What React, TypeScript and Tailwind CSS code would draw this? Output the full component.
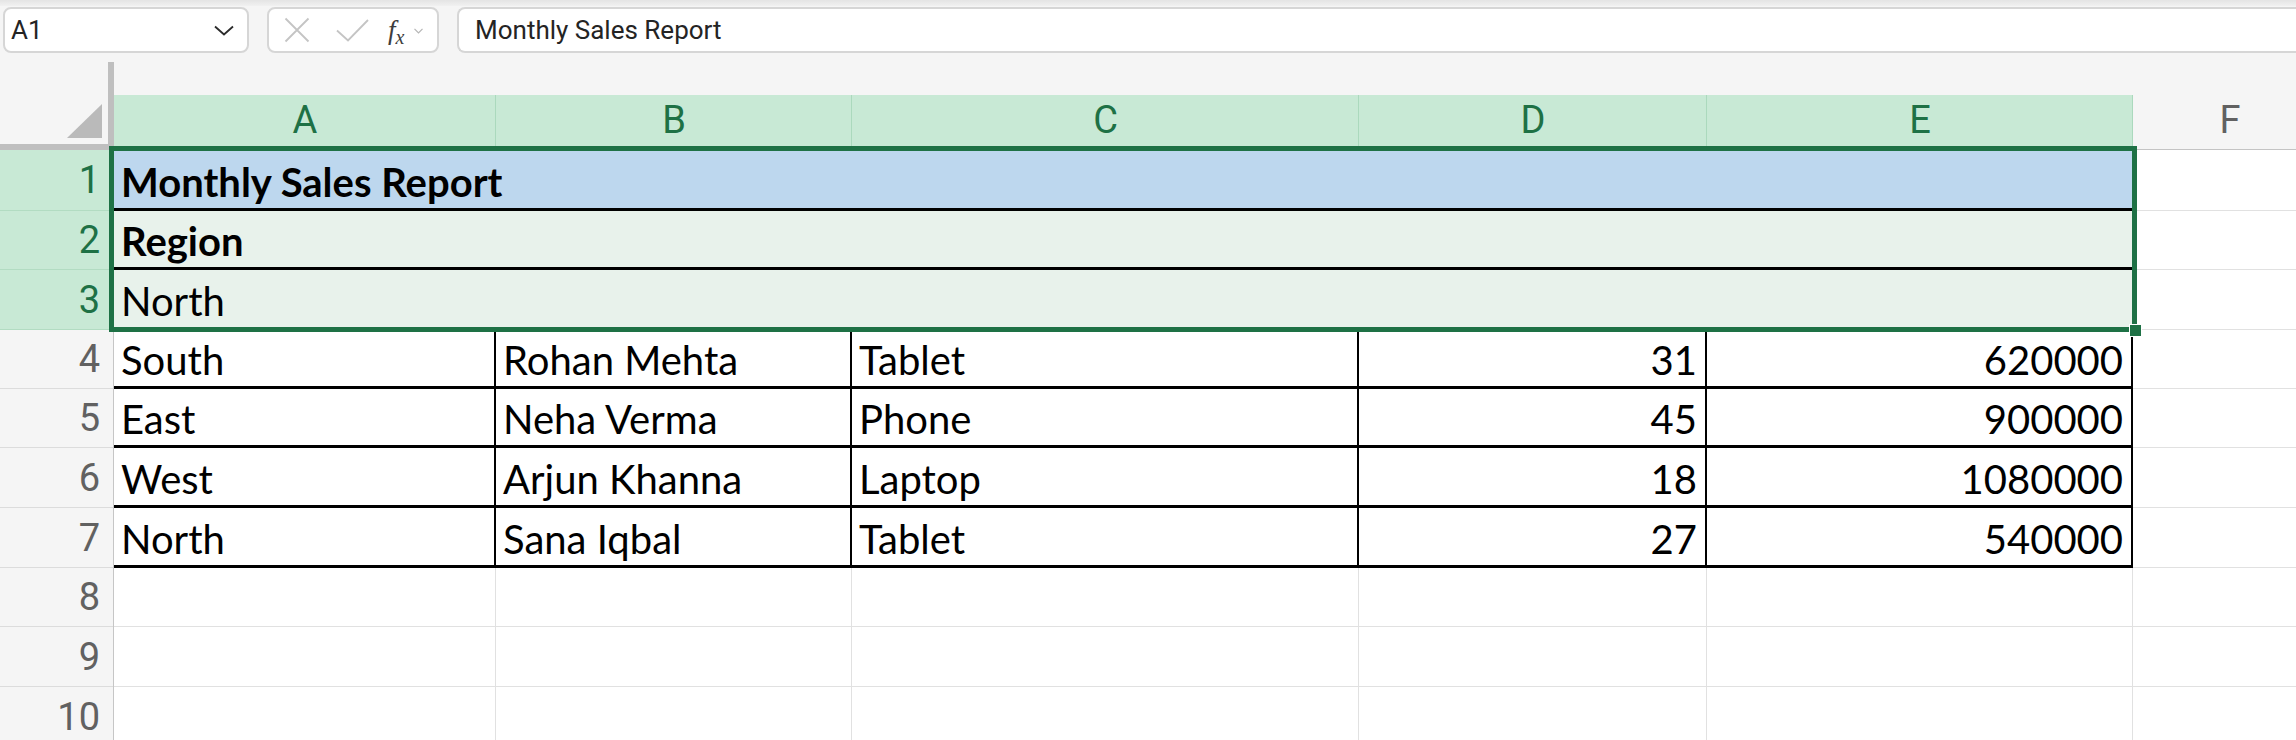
import React from 'react';

const COLS = ['A', 'B', 'C', 'D', 'E'];

const HEIGHTS: Record<number, string> = {
  1: 'h-[61px]',
  2: 'h-[59px]',
  3: 'h-[60px]',
  4: 'h-[59px]',
  5: 'h-[59px]',
  6: 'h-[60px]',
  7: 'h-[60px]',
  8: 'h-[59px]',
  9: 'h-[60px]',
  10: 'h-[60px]',
};

const DATA = [
  ['South', 'Rohan Mehta', 'Tablet', '31', '620000'],
  ['East', 'Neha Verma', 'Phone', '45', '900000'],
  ['West', 'Arjun Khanna', 'Laptop', '18', '1080000'],
  ['North', 'Sana Iqbal', 'Tablet', '27', '540000'],
];

const cellFont = "font-['Lato','Open_Sans',sans-serif] text-[40px] text-black";
const uiFont = "font-['Roboto','Noto_Sans',sans-serif]";

const RowHeader = ({ n, selected }: { n: number; selected?: boolean }) => (
  <div
    className={`${HEIGHTS[n]} flex items-center justify-end pr-[14px] ${uiFont} text-[38px] ${
      selected
        ? 'bg-[#c8e9d5] text-[#1e7145] shadow-[inset_0_-1px_0_#b2dcc2]'
        : 'bg-[#f5f5f5] text-[#616161] shadow-[inset_-1px_0_0_#c6c6c6,inset_0_-1px_0_#dcdcdc]'
    }`}
  >
    {n}
  </div>
);

const Cell = ({
  row,
  text,
  right,
  className,
}: {
  row: number;
  text?: string;
  right?: boolean;
  className: string;
}) => (
  <div
    className={`${HEIGHTS[row]} flex items-end pb-[5px] ${right ? 'justify-end pr-[10px]' : 'pl-[7px]'} ${cellFont} ${className}`}
  >
    <span className="leading-[48px] whitespace-nowrap">{text}</span>
  </div>
);

function Toolbar() {
  return (
    <div className="h-[53px] relative bg-[#f5f5f5]">
      <div className="h-[6px] bg-gradient-to-b from-[#e4e4e4] to-[#f1f1f1]" />
      <div className="flex items-start pt-[1px] pl-[3px]">
        <div className={`w-[246px] h-[46px] bg-white border-2 border-[#d6d6d6] rounded-[8px] flex items-center justify-between pl-[6px] pr-[13px] ${uiFont} text-[26px] text-[#242424]`}>
          <span>A1</span>
          <svg width="20" height="11" viewBox="0 0 20 11" fill="none">
            <path d="M1 1.5L10 9.5L19 1.5" stroke="#2b2b2b" strokeWidth="1.8" />
          </svg>
        </div>
        <div className="ml-[18px] w-[172px] h-[46px] bg-white border-2 border-[#d6d6d6] rounded-[8px] flex items-center pl-[15px]">
          <svg width="26" height="26" viewBox="0 0 26 26" fill="none">
            <path d="M1.5 1.5L24.5 24.5M24.5 1.5L1.5 24.5" stroke="#c4c4c4" strokeWidth="1.8" />
          </svg>
          <svg className="ml-[26px]" width="33" height="23" viewBox="0 0 33 23" fill="none">
            <path d="M1 11.5L12 21.5L32 1" stroke="#c4c4c4" strokeWidth="1.8" />
          </svg>
          <span className="ml-[19px] font-['Liberation_Serif',serif] italic text-[27px] text-[#3d3d3d] leading-none">
            f<span className="text-[20px] relative top-[5px]">x</span>
          </span>
          <svg className="ml-[10px] mt-[2px]" width="9" height="6" viewBox="0 0 9 6" fill="none">
            <path d="M0.5 0.8L4.5 4.8L8.5 0.8" stroke="#b5b5b5" strokeWidth="1.2" />
          </svg>
        </div>
        <div className={`ml-[18px] flex-1 h-[46px] bg-white border-2 border-r-0 border-[#d6d6d6] rounded-l-[8px] flex items-center pl-[16px] ${uiFont} text-[26px] text-[#242424]`}>
          Monthly Sales Report
        </div>
      </div>
    </div>
  );
}

export default function App() {
  return (
    <div className="w-[2296px] h-[740px] overflow-hidden bg-[#f5f5f5]">
      <Toolbar />
      <div className="relative h-[687px] overflow-hidden">
        <div className="grid grid-cols-[114px_382px_356px_507px_348px_426px_194px]">
          {/* corner */}
          <div className="row-span-2 h-[97px] pt-[9px]">
            <div className="h-full border-r-[6px] border-b-[6px] border-[#bfbfbf] flex items-end justify-end pr-[6px] pb-[6px]">
              <svg width="35" height="34" viewBox="0 0 35 34">
                <polygon points="35,0 35,34 0,34" fill="#bababa" />
              </svg>
            </div>
          </div>
          <div className="col-span-6 h-[42px] bg-[#f5f5f5]" />

          {/* column headers */}
          {COLS.map((c) => (
            <div
              key={c}
              className={`h-[55px] pb-[4px] flex items-center justify-center bg-[#c8e9d5] shadow-[inset_-1px_0_0_#abd9bd] ${uiFont} text-[38px] text-[#1e7145]`}
            >
              {c}
            </div>
          ))}
          <div className={`h-[55px] pb-[4px] flex items-center justify-center bg-[#f5f5f5] shadow-[inset_0_-1px_0_#c4c4c4] ${uiFont} text-[38px] text-[#616161]`}>
            F
          </div>

          {/* row 1 */}
          <RowHeader n={1} selected />
          <Cell row={1} text="Monthly Sales Report" className="col-span-5 font-bold bg-[#bdd7ee] shadow-[inset_0_-3px_0_#000]" />
          <Cell row={1} className="bg-white shadow-[inset_0_-1px_0_#e1e1e1]" />

          {/* row 2 */}
          <RowHeader n={2} selected />
          <Cell row={2} text="Region" className="col-span-5 font-bold bg-[#e8f2eb] shadow-[inset_0_-3px_0_#000]" />
          <Cell row={2} className="bg-white shadow-[inset_0_-1px_0_#e1e1e1]" />

          {/* row 3 */}
          <RowHeader n={3} selected />
          <Cell row={3} text="North" className="col-span-5 bg-[#e8f2eb]" />
          <Cell row={3} className="bg-white shadow-[inset_0_-1px_0_#e1e1e1]" />

          {/* rows 4-7 */}
          {DATA.map((r, i) => {
            const row = i + 4;
            return (
              <React.Fragment key={row}>
                <RowHeader n={row} />
                {r.map((v, j) => (
                  <Cell
                    key={j}
                    row={row}
                    text={v}
                    right={j >= 3}
                    className="bg-white shadow-[inset_-2px_-3px_0_#000]"
                  />
                ))}
                <Cell row={row} className="bg-white shadow-[inset_0_-1px_0_#e1e1e1]" />
              </React.Fragment>
            );
          })}

          {/* rows 8-10 */}
          {[8, 9, 10].map((row) => (
            <React.Fragment key={row}>
              <RowHeader n={row} />
              {[0, 1, 2, 3, 4].map((j) => (
                <Cell key={j} row={row} className="bg-white shadow-[inset_-1px_-1px_0_#e1e1e1]" />
              ))}
              <Cell row={row} className="bg-white shadow-[inset_0_-1px_0_#e1e1e1]" />
            </React.Fragment>
          ))}
        </div>

        {/* selection outline */}
        <div className="absolute left-[109px] top-[93px] w-[2028px] h-[186px] border-[5px] border-[#1e7145] pointer-events-none" />
        <div className="absolute left-[2129px] top-[271px] w-[13px] h-[13px] bg-[#1e7145] border border-white" />
      </div>
    </div>
  );
}
